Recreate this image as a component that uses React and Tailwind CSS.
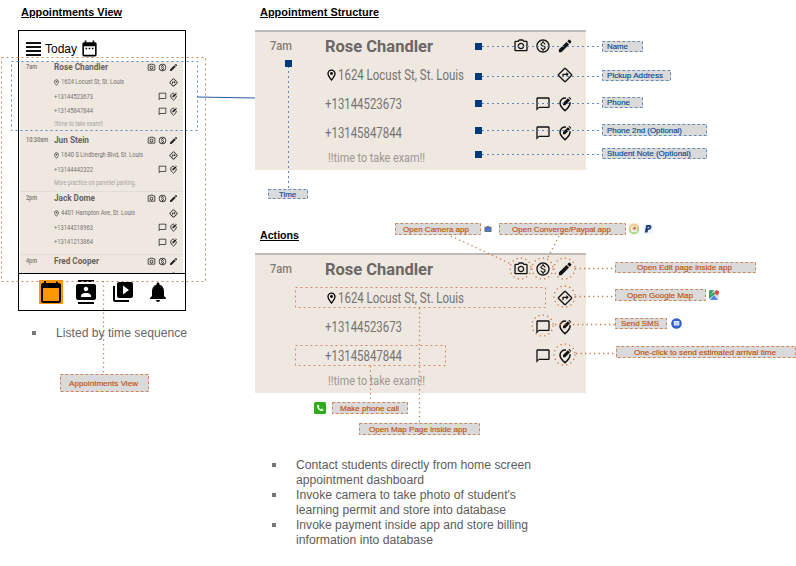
import React, { useLayoutEffect, useRef, useState } from "react";
import {
  MdOutlineCameraAlt,
  MdOutlineMonetizationOn,
  MdOutlineDirections,
  MdChatBubbleOutline,
  MdDateRange,
  MdCalendarToday,
  MdContacts,
  MdVideoLibrary,
  MdNotifications,
} from "react-icons/md";

/* Text condensed or widened to an exact width. */
function Fit({ w, className = "", children }) {
  const ref = useRef(null);
  const [k, setK] = useState(1);
  useLayoutEffect(() => {
    const span = ref.current;
    span.style.transform = "none";
    const natural = span.getBoundingClientRect().width;
    span.style.transform = `scaleX(${w / natural})`;
    setK(w / natural);
  }, [w]);
  return (
    <span className="flex shrink-0" style={{ width: w }}>
      <span
        ref={ref}
        className={"block shrink-0 origin-left whitespace-nowrap " + className}
        style={{ transform: `scaleX(${k})` }}
      >
        {children}
      </span>
    </span>
  );
}

function Heading({ w, children }) {
  return (
    <h2 className="flex h-[15px] items-center text-[11px] leading-[15px] font-bold text-black">
      <Fit w={w} className="underline underline-offset-[1px]">{children}</Fit>
    </h2>
  );
}

function Pencil({ className }) {
  return (
    <svg className={className} viewBox="0 0 24 24" fill="currentColor">
      <path d="M2.800 21.200v-3.800L14.300 5.900l3.800 3.800L6.600 21.200z" />
      <path d="M15.500 4.700l1.700-1.700q1.200-1.200 2.400 0l1.400 1.400q1.200 1.200 0 2.400L19.300 8.500z" />
    </svg>
  );
}

function EditLocation({ className }) {
  return (
    <svg className={className} viewBox="0 0 24 24" fill="none" stroke="currentColor" strokeWidth="2.300">
      <path d="M13.500 3.200C8.500 2.400 4.500 6 4.500 10.700c0 3.800 2.700 7 7.500 11.300 4.800-4.300 7.500-7.500 7.500-11.300V9.500" />
      <path d="M9 13.800v-3.300l7.300-7.300 3.300 3.300-7.300 7.300z" fill="currentColor" stroke="none" />
      <path d="M17.300 2.200l1-1 3.300 3.300-1 1z" fill="currentColor" stroke="none" />
    </svg>
  );
}

function Pin({ className }) {
  return (
    <svg className={className} viewBox="0 0 18 24" fill="none" stroke="currentColor" strokeWidth="2.600">
      <path d="M9 22C4.500 16.800 2 13 2 9.200a7 7 0 0 1 14 0C16 13 13.500 16.800 9 22z" />
      <circle cx="9" cy="9" r="2.800" fill="currentColor" stroke="none" />
    </svg>
  );
}

/* Right-aligned action icons of one row; each icon keeps its own column. */
function Icons({ kind, small }) {
  const cls = small ? "size-[9px]" : "size-4";
  const sets = {
    name: [MdOutlineCameraAlt, MdOutlineMonetizationOn, Pencil],
    address: [MdOutlineDirections],
    phone: [MdChatBubbleOutline, EditLocation],
    note: [],
  };
  return (
    <span className={"ml-auto flex " + (small ? "gap-[2px] pr-[5px] text-[#222]" : "gap-[6px] pr-[13.5px] text-[#111]")}>
      {sets[kind].map((Icon, i) => (
        <Icon key={i} className={cls} />
      ))}
    </span>
  );
}

function SmallRow({ time, timeW, kind, text, w }) {
  const height = kind === "note" ? "h-[12.5px]" : kind === "name" ? "h-[13.8px]" : "h-[14.6px]";
  return (
    <div className={"flex items-center " + height}>
      <span className="flex w-[33.5px] shrink-0 items-center pl-[6px] text-[7px] font-medium text-[#7b7773]">
        {time && <Fit w={timeW}>{time}</Fit>}
      </span>
      {kind === "name" && <Fit w={w} className="text-[9px] font-bold text-[#65625f]">{text}</Fit>}
      {kind === "address" && (
        <>
          <Pin className="mr-[1.5px] ml-[0.5px] h-[7px] w-[5px] text-[#333]" />
          <Fit w={w} className="text-[8px] text-[#75726f]">{text}</Fit>
        </>
      )}
      {kind === "phone" && <Fit w={w} className="text-[8px] text-[#75726f]">{text}</Fit>}
      {kind === "note" && <Fit w={w} className="text-[7px] text-[#a5a19d]">{text}</Fit>}
      <Icons kind={kind} small />
    </div>
  );
}

const phoneList = [
  {
    box: "h-[73px]",
    rows: [
      { time: "7am", timeW: 11, kind: "name", text: "Rose Chandler", w: 54 },
      { kind: "address", text: "1624 Locust St, St. Louis", w: 63 },
      { kind: "phone", text: "+13144523673", w: 39 },
      { kind: "phone", text: "+13145847844", w: 39 },
      { kind: "note", text: "!!time to take exam!!", w: 49 },
    ],
  },
  {
    box: "h-[58px] border-b border-[#e0dcd6]",
    rows: [
      { time: "10:30am", timeW: 22, kind: "name", text: "Jun Stein", w: 35 },
      { kind: "address", text: "1640 S Lindbergh Blvd, St. Louis", w: 82 },
      { kind: "phone", text: "+13144442322", w: 39 },
      { kind: "note", text: "More practice on parrellel parking.", w: 82 },
    ],
  },
  {
    box: "h-[63px] border-b border-[#e0dcd6]",
    rows: [
      { time: "2pm", timeW: 11, kind: "name", text: "Jack Dome", w: 41 },
      { kind: "address", text: "4401 Hampton Ave, St. Louis", w: 74 },
      { kind: "phone", text: "+13144218963", w: 39 },
      { kind: "phone", text: "+13141213864", w: 39 },
    ],
  },
  {
    box: "h-[40px]",
    rows: [
      { time: "4pm", timeW: 11, kind: "name", text: "Fred Cooper", w: 45 },
      { kind: "address", text: "1922 Hamilton Ave, St. Louis", w: 62 },
    ],
  },
];

function Phone() {
  return (
    <div className="flex h-[281px] w-[168px] flex-col border border-black bg-white">
      <div className="flex h-[30px] shrink-0 items-center pt-[5px] pl-[7px]">
        <div className="flex w-[15px] flex-col gap-[2px] pt-px">
          <i className="h-[1.8px] bg-[#111]" />
          <i className="h-[1.8px] bg-[#111]" />
          <i className="h-[1.8px] bg-[#111]" />
          <i className="h-[1.8px] bg-[#111]" />
        </div>
        <span className="ml-1 flex text-[13px] leading-[15px] text-black">
          <Fit w={32}>Today</Fit>
        </span>
        <MdDateRange className="ml-[3px] size-[19px] text-black" />
      </div>
      <div className="ml-px h-[212px] w-[163px] shrink-0 overflow-hidden bg-[#efe8e1] font-['Roboto',sans-serif] leading-none">
        {phoneList.map((item, i) => (
          <div key={i} className={item.box}>
            {item.rows.map((r, j) => (
              <SmallRow key={j} {...r} />
            ))}
          </div>
        ))}
      </div>
      <div className="flex flex-1 items-start border-t border-black pt-[6px] pl-5 text-black">
        <span className="flex size-6 bg-[#ff9800]">
          <MdCalendarToday className="size-6" />
        </span>
        <MdContacts className="ml-[11px] size-6" />
        <MdVideoLibrary className="ml-[13px] size-6" />
        <MdNotifications className="ml-[11px] size-6" />
      </div>
    </div>
  );
}

function Card() {
  return (
    <div className="h-[140px] w-[331px] border-t-2 border-[#bdbbb8] bg-[#efe8e1] font-['Roboto',sans-serif] leading-none text-[#76726e]">
      <div className="flex h-7 items-center">
        <span className="w-[70px] pl-[15px] text-[13.5px] font-medium text-[#7f7b77]">
          <Fit w={22}>7am</Fit>
        </span>
        <Fit w={108} className="pt-px text-[17px] font-bold text-[#6a6764]">Rose Chandler</Fit>
        <Icons kind="name" />
      </div>
      <div className="flex h-[29px] items-center pl-[72px]">
        <Pin className="mr-[2px] h-3 w-[9px] text-black" />
        <Fit w={126} className="text-[14px]">1624 Locust St, St. Louis</Fit>
        <Icons kind="address" />
      </div>
      <div className="flex h-[29px] items-center pl-[70px]">
        <Fit w={77} className="text-[14px]">+13144523673</Fit>
        <Icons kind="phone" />
      </div>
      <div className="flex h-[29px] items-center pl-[70px]">
        <Fit w={77} className="text-[14px]">+13145847844</Fit>
        <Icons kind="phone" />
      </div>
      <div className="flex h-[23px] items-center pl-[73px]">
        <Fit w={97} className="text-[12.5px] text-[#9b9793]">!!time to take exam!!</Fit>
      </div>
    </div>
  );
}

const BLUE = "#0b4a8f";
const RUST = "#c0520f";

/* Annotation labels: x, y, width, height, text, text x, text width. */
const labels = [
  [602, 41, 41, 11, "Name", 607, 21, BLUE],
  [602, 70, 69, 11, "Pickup Address", 607, 56, BLUE],
  [602, 97, 41, 11, "Phone", 607, 23, BLUE],
  [602, 124, 105, 12, "Phone 2nd (Optional)", 607, 75, BLUE],
  [602, 148, 105, 11, "Student Note (Optional)", 607, 84, BLUE],
  [268, 189, 40, 10, "Time", 279, 17, BLUE],
  [395, 223, 86, 12, "Open Camera app", 403, 66, RUST],
  [499, 223, 127, 12, "Open Converge/Paypal app", 512, 99, RUST],
  [615, 262, 141, 11, "Open Edit page inside app", 637, 95, RUST],
  [615, 289, 91, 12, "Open Google Map", 627, 66, RUST],
  [615, 318, 52, 11, "Send SMS", 621, 38, RUST],
  [616, 346, 180, 12, "One-click to send estimated arrival time", 634, 142, RUST],
  [332, 402, 76, 12, "Make phone call", 340, 59, RUST],
  [359, 423, 121, 12, "Open Map Page inside app", 369, 98, RUST],
  [60, 374, 89, 18, "Appointments View", 69, 69, RUST],
];

function Label({ spec }) {
  const [x, y, w, h, text, tx, tw, color] = spec;
  return (
    <div
      className={
        "absolute flex items-center bg-[#dadada] text-[8px] leading-[9px] [-webkit-text-stroke:0.15px] " +
        (color === BLUE ? "text-[#0b4a8f]" : "text-[#c0520f]")
      }
      style={{ left: x, top: y, width: w, height: h, paddingLeft: tx - x }}
    >
      <Fit w={tw}>{text}</Fit>
    </div>
  );
}

function Connectors() {
  const blueLines = [46, 76, 103, 130, 154];
  return (
    <svg className="pointer-events-none absolute inset-0" width="796" height="566" fill="none">
      <g stroke="#5d86b8" strokeDasharray="2 3">
        {blueLines.map((y) => (
          <path key={y} d={`M482 ${y + 0.5}H602`} />
        ))}
        <path d="M288.5 66V189" />
        <rect x="11.5" y="61.5" width="186" height="69" />
      </g>
      <path d="M197 97L255 98" stroke="#2a5f9e" strokeWidth="1.2" />
      <g fill="#003a7a">
        <path d="M475 43h7v7h-7zM475 73h7v7h-7zM475 100h7v7h-7zM475 127h7v7h-7zM475 151h7v7h-7zM285 60h7v7h-7z" />
      </g>
      <g stroke="#d08b63" strokeDasharray="2 3">
        <rect x="1.5" y="57.5" width="204" height="224" />
        <rect x="295.5" y="287.5" width="250" height="20" />
        <rect x="295.5" y="345.5" width="150" height="20" />
      </g>
      <g stroke="#c9784a" strokeDasharray="1.3 3.2" strokeWidth="1.3">
        <path d="M103.5 281V374M370.5 366V402M419.5 308V423" />
        <path d="M451 236L511 264M559 236L547 259" />
        <path d="M575 268.5H615M575 296.5H615M555 324.5H615M576 353.5H615" />
        <circle cx="520.5" cy="268.5" r="10.5" />
        <circle cx="542.5" cy="268.5" r="10.5" />
        <circle cx="564.5" cy="268.5" r="10.5" />
        <circle cx="564.5" cy="296.5" r="10.5" />
        <circle cx="542.5" cy="325.5" r="10.5" />
        <circle cx="564.5" cy="354.5" r="10.5" />
      </g>
      {labels.map(([x, y, w, h, , , , color]) => (
        <rect
          key={`${x}-${y}`}
          x={x + 0.5}
          y={y + 0.5}
          width={w - 1}
          height={h - 1}
          stroke={color === BLUE ? "#5f86b5" : "#cb8259"}
          strokeDasharray="2.6 2.4"
        />
      ))}
    </svg>
  );
}

function AppLogos() {
  return (
    <>
      {/* camera */}
      <svg className="absolute top-[225px] left-[484px]" width="8" height="8" viewBox="0 0 9 8">
        <path d="M.5 1.500h2.200l.7-1h2.200l.7 1h2.200V7.500H.5z" fill="#6b7178" />
        <circle cx="4.5" cy="4.300" r="2.400" fill="#3f7fe0" />
      </svg>
      {/* converge */}
      <svg className="absolute top-[223px] left-[628px]" width="12" height="12" viewBox="0 0 12 12" fill="none">
        <rect width="12" height="12" fill="#faf7f3" />
        <circle cx="6" cy="6" r="4.200" stroke="#a6dc8f" strokeWidth="2" />
        <path d="M1.800 6A4.200 4.200 0 0 1 9.800 4" stroke="#f3cd9c" strokeWidth="2" />
        <circle cx="6.500" cy="5.500" r="2.200" fill="#f2b795" />
        <circle cx="6.500" cy="5.200" r=".9" fill="#a0503a" />
      </svg>
      {/* paypal */}
      <svg className="absolute top-[224px] left-[643px]" width="10" height="10" viewBox="0 0 10 10">
        <rect width="10" height="10" rx="1" fill="#f0f4f8" />
        <path d="M3.200 1h3c2 0 2.600 1.300 2.100 2.800C7.900 5.500 6.500 6 5 6l-.5 2.600H1.800z" fill="#1c3f7c" />
        <path d="M4.700 3h1.300c1 0 .6 1.300-.7 1.300h-.8z" fill="#c7dcf2" />
      </svg>
      {/* map */}
      <svg className="absolute top-[290px] left-[709px]" width="10" height="10" viewBox="0 0 10 10">
        <rect width="10" height="10" rx="1.500" fill="#dfe3e2" />
        <path d="M0 1.500Q0 0 1.500 0H5L0 7z" fill="#35a365" />
        <path d="M1 10L5 5l4 5z" fill="#4a87e8" />
        <path d="M0 6L5 2l1.500 1.500L0 9z" fill="#35a365" />
        <path d="M8 5.800L6.200 3.500a2.100 2.100 0 1 1 3.500 0z" fill="#df4a3d" />
      </svg>
      {/* messages */}
      <svg className="absolute top-[318px] left-[671px]" width="11" height="11" viewBox="0 0 11 11">
        <circle cx="5.500" cy="5.500" r="5.300" fill="#3560c8" />
        <rect x="2.800" y="3" width="5.500" height="4.600" rx=".6" fill="#e9effc" />
        <path d="M3.800 4.500h3.500M3.800 6h3.500" stroke="#7f9fe0" strokeWidth=".6" />
      </svg>
      {/* phone */}
      <svg className="absolute top-[402px] left-[314px]" width="12" height="12" viewBox="0 0 12 12">
        <rect width="12" height="12" rx="1.500" fill="#2faa1c" />
        <path
          d="M3 3.200L4.400 2.400l1.200 2-.8.9q.6 1.300 1.900 1.900l.9-.8 2 1.200-.8 1.400C5.500 9.500 2.500 6 3 3.200z"
          fill="#e8f7e4"
        />
      </svg>
    </>
  );
}

function Bullet({ lines }) {
  return (
    <li className="flex gap-5">
      <i className="mt-[5px] size-[4px] shrink-0 bg-[#757575]" />
      <div className="flex flex-col">
        {lines.map(([text, w]) => (
          <Fit key={text} w={w}>{text}</Fit>
        ))}
      </div>
    </li>
  );
}

export default function App() {
  return (
    <main className="relative flex h-[566px] w-[796px] overflow-hidden bg-white font-['Liberation_Sans',Arial,sans-serif]">
      <section className="w-[255px] shrink-0 pt-[5px] pl-[18px]">
        <div className="h-[25px] pl-[3px]">
          <Heading w={101}>Appointments View</Heading>
        </div>
        <Phone />
        <ul className="mt-[15px] pl-[14px] text-[12px] leading-[15px] text-[#666]">
          <Bullet lines={[["Listed by time sequence", 131]]} />
        </ul>
      </section>
      <section className="pt-[5px]">
        <div className="h-[25px] pl-[5px]">
          <Heading w={119}>Appointment Structure</Heading>
        </div>
        <Card />
        <div className="h-[83px] pt-[58px] pl-[5px]">
          <Heading w={39}>Actions</Heading>
        </div>
        <Card />
        <ul className="mt-[65px] flex flex-col pl-[17px] text-[12px] leading-[15px] text-[#5c5c5c]">
          <Bullet
            lines={[["Contact students directly from home screen", 235], ["appointment dashboard", 128]]}
          />
          <Bullet
            lines={[["Invoke camera to take photo of student's", 220], ["learning permit and store into database", 210]]}
          />
          <Bullet
            lines={[["Invoke payment inside app and store billing", 232], ["information into database", 137]]}
          />
        </ul>
      </section>
      {labels.map((l) => (
        <Label key={l[4] + l[0]} spec={l} />
      ))}
      <Connectors />
      <AppLogos />
    </main>
  );
}
